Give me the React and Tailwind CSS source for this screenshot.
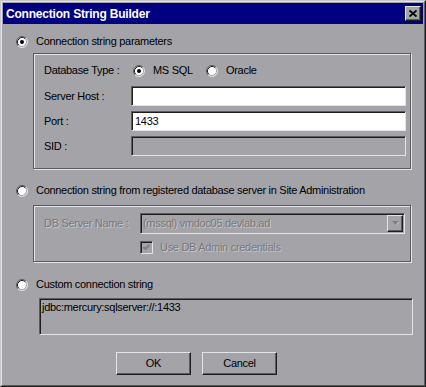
import React from 'react';

const sunken = 'border border-t-[#5c5c60] border-l-[#5c5c60] border-r-[#e4e4e8] border-b-[#e4e4e8] shadow-[inset_1px_1px_0_#1e1e1e]';
const raised = 'border border-t-[#e4e4e8] border-l-[#e4e4e8] border-r-[#1e1e1e] border-b-[#1e1e1e] shadow-[inset_-1px_-1px_0_#5c5c60]';
const etched = 'border border-[#5c5c60] shadow-[inset_1px_1px_0_#e4e4e8,1px_1px_0_#e4e4e8]';
const disabledText = 'text-[#78787c] [text-shadow:1px_1px_0_#c8c8cc]';

const Radio = ({ checked }) => (
    <svg width="12" height="12" viewBox="0 0 12 12" className="shrink-0">
        <circle cx="6" cy="6" r="5" fill="#fff" />
        <path d="M2.11 9.89A5.5 5.5 0 0 1 9.89 2.11" stroke="#5c5c60" fill="none" />
        <path d="M9.89 2.11A5.5 5.5 0 0 1 2.11 9.89" stroke="#e4e4e8" fill="none" />
        <path d="M2.82 9.18A4.5 4.5 0 0 1 9.18 2.82" stroke="#1e1e1e" fill="none" />
        <path d="M9.18 2.82A4.5 4.5 0 0 1 2.82 9.18" stroke="#a3a3a8" fill="none" />
        {checked && <circle cx="6" cy="6" r="2" fill="#000" />}
    </svg>
);

const TextField = ({ value, disabled }) => (
    <div className={`${sunken} h-[20px] w-[275px] pl-[3px] flex items-center ${disabled ? 'bg-[#a3a3a8]' : 'bg-white'}`}>
        {value}
    </div>
);

const App = () => {
    return (
        <div className="w-[426px] h-[387px] border border-t-[#c8c8cc] border-l-[#c8c8cc] border-r-[#1e1e1e] border-b-[#1e1e1e] font-['Liberation_Sans',Arial,sans-serif] text-[11px] leading-[13px] tracking-[-0.3px] text-black">
            <div className="h-full border border-t-[#e4e4e8] border-l-[#e4e4e8] border-r-[#5c5c60] border-b-[#5c5c60] p-px bg-[#a3a3a8] flex flex-col">
                {/* Title bar */}
                <div className="h-[21px] bg-[#000080] flex items-center justify-between pl-[3px] pr-[2px]">
                    <span className="text-white font-bold text-[12px] leading-[14px] tracking-[-0.2px]">Connection String Builder</span>
                    <div className={`${raised} w-[16px] h-[15px] bg-[#a3a3a8] flex items-center justify-center`}>
                        <svg width="8" height="7" viewBox="0 0 8 7">
                            <path d="M0.5 0.5L7.5 6.5M7.5 0.5L0.5 6.5" stroke="#000" strokeWidth="1.8" />
                        </svg>
                    </div>
                </div>

                {/* Body */}
                <div className="flex flex-col pl-[13px]">
                    <div className="mt-[11px] h-[13px] flex items-center gap-[8px]">
                        <Radio checked />
                        <span>Connection string parameters</span>
                    </div>

                    <div className={`${etched} ml-[17px] mt-[5px] w-[378px] h-[116px] pt-[10px] pl-[10px] flex flex-col`}>
                        <div className="h-[13px] flex items-center">
                            <span className="w-[89px]">Database Type :</span>
                            <div className="w-[73px] flex items-center gap-[8px]">
                                <Radio checked />
                                <span>MS SQL</span>
                            </div>
                            <div className="flex items-center gap-[8px]">
                                <Radio />
                                <span>Oracle</span>
                            </div>
                        </div>
                        <div className="mt-[9px] flex items-center">
                            <span className="w-[87px]">Server Host :</span>
                            <TextField value="" />
                        </div>
                        <div className="mt-[5px] flex items-center">
                            <span className="w-[87px]">Port :</span>
                            <TextField value="1433" />
                        </div>
                        <div className="mt-[5px] flex items-center">
                            <span className="w-[87px]">SID :</span>
                            <TextField value="" disabled />
                        </div>
                    </div>

                    <div className="mt-[15px] h-[13px] flex items-center gap-[8px]">
                        <Radio />
                        <span>Connection string from registered database server in Site Administration</span>
                    </div>

                    <div className={`${etched} ml-[17px] mt-[8px] w-[378px] h-[57px] pt-[7px] pl-[10px] flex flex-col`}>
                        <div className="flex items-center">
                            <span className={`w-[96px] ${disabledText}`}>DB Server Name :</span>
                            <div className={`${sunken} h-[21px] w-[265px] flex items-center justify-between pl-[2px] pr-px`}>
                                <span className={disabledText}>(mssql) vmdoc05.devlab.ad</span>
                                <div className={`${raised} w-[16px] h-[17px] flex items-center justify-center`}>
                                    <svg width="7" height="5" viewBox="0 0 7 5">
                                        <path d="M1 1h6l-3 3z" fill="#e4e4e8" />
                                        <path d="M0 0h7l-3.5 4z" fill="#7e7e82" />
                                    </svg>
                                </div>
                            </div>
                        </div>
                        <div className="mt-[7px] ml-[96px] h-[13px] flex items-center gap-[7px]">
                            <div className={`${sunken} w-[13px] h-[13px] flex items-center justify-center`}>
                                <svg width="9" height="9" viewBox="0 0 9 9">
                                    <path d="M1.5 4l2 2 4-4" stroke="#7e7e82" strokeWidth="1.8" fill="none" />
                                </svg>
                            </div>
                            <span className={disabledText}>Use DB Admin credentials</span>
                        </div>
                    </div>

                    <div className="mt-[16px] h-[13px] flex items-center gap-[8px]">
                        <Radio />
                        <span>Custom connection string</span>
                    </div>

                    <div className={`${sunken} ml-[23px] mt-[7px] w-[374px] h-[37px] pt-[2px] pl-[2px]`}>
                        jdbc:mercury:sqlserver://:1433
                    </div>

                    <div className="mt-[17px] ml-[100px] flex gap-[11px]">
                        <div className={`${raised} w-[75px] h-[23px] flex items-center justify-center`}>OK</div>
                        <div className={`${raised} w-[75px] h-[23px] flex items-center justify-center`}>Cancel</div>
                    </div>
                </div>
            </div>
        </div>
    );
};

export default App;
